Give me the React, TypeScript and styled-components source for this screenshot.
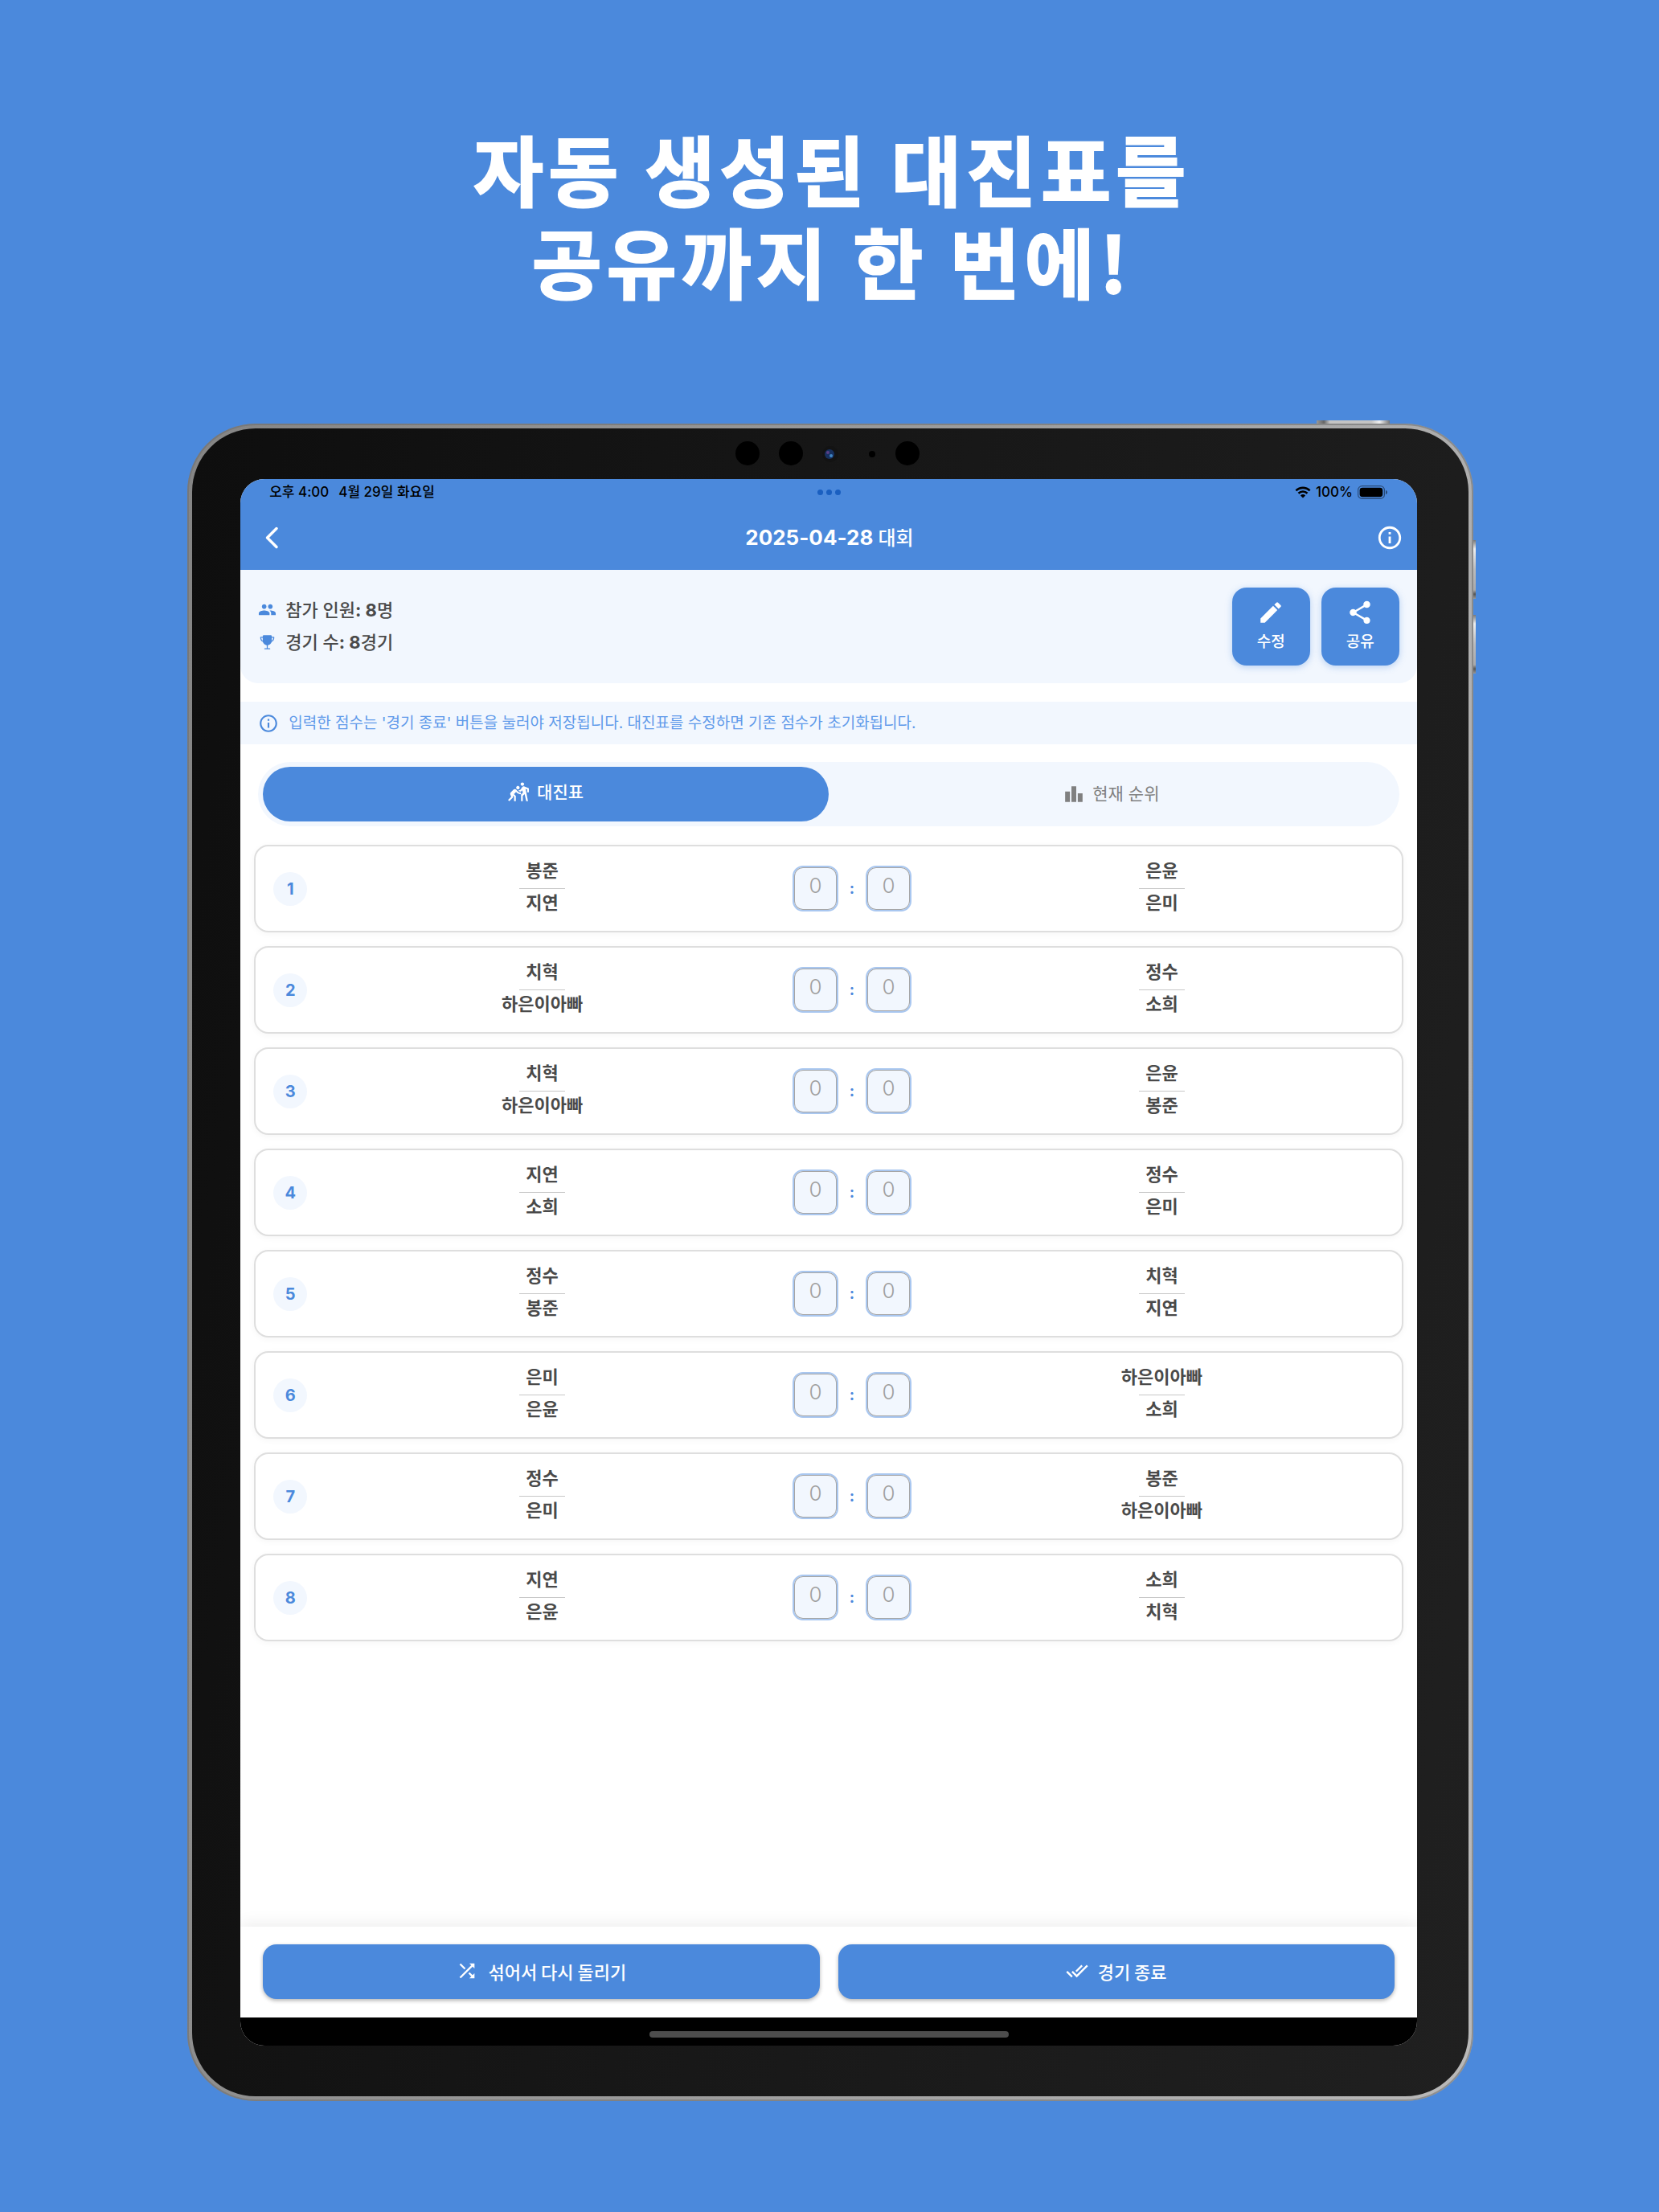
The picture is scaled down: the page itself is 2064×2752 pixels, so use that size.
import React from "react";
import styled, { createGlobalStyle, css } from "styled-components";
import {
  MdDoneAll,
  MdEdit,
  MdInfoOutline,
  MdLeaderboard,
  MdPeople,
  MdShare,
  MdShuffle,
  MdSportsKabaddi,
} from "react-icons/md";
import { IoTrophy } from "react-icons/io5";

const color = {
  blue: "#4b89dc",
  pale: "#f2f7fe",
  text: "#4a4a4a",
  muted: "#808080",
  line: "#dedede",
};
const sans = `Inter, "Noto Sans CJK KR", sans-serif`;
const korean = `"Noto Sans CJK KR", sans-serif`;

const GlobalStyle = createGlobalStyle`
  *, *::before, *::after { box-sizing: border-box; }
  body { margin: 0; background: ${color.blue}; font-family: ${sans}; color: ${color.text}; }
  button, input { font: inherit; color: inherit; margin: 0; }
  button { border: 0; background: none; padding: 0; cursor: pointer; }
  svg { display: block; flex: none; }
`;

const Page = styled.main`
  display: flex;
  flex-direction: column;
  align-items: center;
  min-height: 100vh;
  padding: 151px 0 137px;
  background: ${color.blue};
`;

const Headline = styled.h1`
  margin: 0 0 146px;
  padding-left: 6px;
  font: 700 95px/115px ${korean};
  letter-spacing: 0.06em;
  -webkit-text-stroke: 2px #fff;
  color: #fff;
  text-align: center;
`;

const Device = styled.div`
  position: relative;
  width: 77.5%;
  margin-left: 2px;
  padding: 6px;
  border-radius: 85px;
  background: linear-gradient(100deg, #858585, #9c9c9c 50%, #b9b9b9);
  box-shadow: inset 0 0 0 2px rgba(110, 110, 110, 0.55);
`;

const SideKey = styled.span<{ $top: number }>`
  position: absolute;
  left: 100%;
  top: ${(p) => p.$top}px;
  width: 3px;
  height: 73px;
  background: linear-gradient(#777, #eee 15%, #bbb 50%, #aaa 85%, #555 92%, #999);
`;

const PowerKey = styled.span`
  position: absolute;
  right: 104px;
  bottom: 100%;
  width: 91px;
  height: 4px;
  background: linear-gradient(90deg, #999, #666 10%, #c4c4c4 18%, #c4c4c4 75%, #f0f0f0 86%, #777);
`;

const Bezel = styled.div`
  padding: 0 64px 63px 60px;
  border-radius: 79px;
  background: linear-gradient(100deg, #0e0e0e, #181818 50%, #202020);
`;

const Sensors = styled.div`
  display: flex;
  align-items: center;
  justify-content: center;
  height: 63px;
  padding: 0 2px 2px 0;
`;

const Screen = styled.div`
  display: flex;
  flex-direction: column;
  aspect-ratio: 1464 / 1950;
  border-radius: 30px;
  overflow: hidden;
  background: #fff;
`;

const Header = styled.header`
  background: ${color.blue};
`;

const StatusBar = styled.div`
  display: grid;
  grid-template-columns: 1fr auto 1fr;
  align-items: center;
  height: 33px;
  padding: 0 36px;
  font-size: 17px;
  line-height: 29px;
  font-weight: 500;
  color: #000;
`;

const StatusGroup = styled.div<{ $end?: boolean }>`
  display: flex;
  align-items: center;
  gap: ${(p) => (p.$end ? 6 : 12)}px;
  justify-content: ${(p) => (p.$end ? "flex-end" : "flex-start")};
`;

const Dots = styled.div`
  display: flex;
  gap: 4px;
  i { width: 7px; height: 7px; border-radius: 50%; background: #1a5fc0; }
`;

const NavBar = styled.div`
  display: grid;
  grid-template-columns: 1fr auto 1fr;
  align-items: center;
  height: 80px;
  padding: 0 17px 0 27px;
  color: #fff;
  button:last-child { justify-self: end; }
`;

const Title = styled.h2`
  margin: 0;
  padding-right: 8px;
  font-size: 26px;
  line-height: 32px;
  font-weight: 700;
  span { font-size: 24px; font-weight: 500; }
`;

const Summary = styled.section`
  display: flex;
  align-items: center;
  justify-content: space-between;
  height: 141px;
  padding: 0 22px;
  border-radius: 0 0 22px 22px;
  background: ${color.pale};
`;

const Facts = styled.ul`
  margin: 0;
  padding: 0 0 2px;
  list-style: none;
`;

const Fact = styled.li`
  display: flex;
  align-items: center;
  gap: 11px;
  font-size: 22px;
  line-height: 40px;
  font-weight: 500;
  svg { width: 23px; color: ${color.blue}; }
  b { font-weight: 700; }
`;

const Actions = styled.div`
  display: flex;
  gap: 14px;
`;

const ActionButton = styled.button`
  display: flex;
  flex-direction: column;
  align-items: center;
  justify-content: center;
  gap: 6px;
  width: 97px;
  height: 97px;
  padding-bottom: 2px;
  border-radius: 18px;
  background: ${color.blue};
  color: #fff;
  font-size: 19px;
  line-height: 28px;
  font-weight: 500;
  box-shadow: 0 2px 8px rgba(75, 137, 220, 0.35);
`;

const Notice = styled.p`
  display: flex;
  align-items: center;
  gap: 12px;
  height: 53px;
  margin: 23px 0 22px;
  padding: 0 22px;
  background: ${color.pale};
  color: #5f9aea;
  font: 400 19px/28px ${sans};
  svg { color: ${color.blue}; }
`;

const Tabs = styled.div`
  display: flex;
  height: 80px;
  margin: 0 22px 23px;
  padding: 6px;
  border-radius: 40px;
  background: ${color.pale};
`;

const Tab = styled.button<{ $active?: boolean }>`
  display: flex;
  flex: 1;
  align-items: center;
  justify-content: center;
  gap: 10px;
  border-radius: 34px;
  font: 400 21px/30px ${sans};
  color: ${color.muted};
  ${(p) => p.$active && css`
    padding-bottom: 4px;
    background: ${color.blue};
    color: #fff;
    font-weight: 500;
  `}
`;

const Matches = styled.ol`
  display: flex;
  flex: 1;
  flex-direction: column;
  gap: 17px;
  margin: 0;
  padding: 0 17px;
  list-style: none;
`;

const Match = styled.li`
  display: flex;
  align-items: center;
  height: 109px;
  padding: 0 22px;
  border: 2px solid ${color.line};
  border-radius: 18px;
  background: #fff;
  box-shadow: 0 2px 8px rgba(0, 0, 0, 0.04);
`;

const Order = styled.span`
  display: grid;
  place-items: center;
  width: 42px;
  height: 42px;
  margin-right: 16px;
  border-radius: 50%;
  background: ${color.pale};
  color: ${color.blue};
  font-size: 20px;
  font-weight: 700;
`;

const Team = styled.div`
  display: flex;
  flex: 1;
  flex-direction: column;
  align-items: center;
  padding-bottom: 6px;
  font: 700 22px/32px ${sans};
  hr {
    width: 57px;
    height: 1px;
    margin: 6px 0 1px;
    border: 0;
    background: #c8c8c8;
  }
`;

const Score = styled.div`
  display: flex;
  align-items: center;
  justify-content: space-between;
  width: 148px;
  margin: 0 35px;
  color: ${color.blue};
  font-size: 19px;
  font-weight: 700;
`;

const ScoreInput = styled.input`
  width: 57px;
  height: 57px;
  padding: 0 0 8px;
  border: 2px solid #a9c7f0;
  border-radius: 13px;
  outline: 0;
  background: ${color.pale};
  box-shadow: inset 0 0 0 1px #a6a6a6;
  font: 300 26px/34px ${sans};
  color: ${color.text};
  text-align: center;
  &::placeholder { color: #a0a0a0; opacity: 1; }
`;

const Footer = styled.footer`
  display: flex;
  gap: 23px;
  padding: 22px 28px 23px;
  background: #fff;
  box-shadow: 0 -4px 18px rgba(0, 0, 0, 0.07);
`;

const FooterButton = styled.button`
  display: flex;
  flex: 1;
  align-items: center;
  justify-content: center;
  gap: 12px;
  height: 68px;
  padding-bottom: 2px;
  border-radius: 17px;
  background: ${color.blue};
  color: #fff;
  font: 500 22px/32px ${korean};
  box-shadow: 0 2px 5px rgba(0, 0, 0, 0.3);
`;

const HomeBar = styled.div`
  display: flex;
  align-items: center;
  justify-content: center;
  height: 35px;
  background: #000;
  i { width: 447px; height: 8px; margin-top: 7px; border-radius: 4px; background: #4d4d4d; }
`;

const matches: [string, string, string, string][] = [
  ["봉준", "지연", "은윤", "은미"],
  ["치혁", "하은이아빠", "정수", "소희"],
  ["치혁", "하은이아빠", "은윤", "봉준"],
  ["지연", "소희", "정수", "은미"],
  ["정수", "봉준", "치혁", "지연"],
  ["은미", "은윤", "하은이아빠", "소희"],
  ["정수", "은미", "봉준", "하은이아빠"],
  ["지연", "은윤", "소희", "치혁"],
];

const SensorArray = () => (
  <svg width="230" height="32" viewBox="0 0 230 32" aria-hidden="true">
    <circle cx="15" cy="16" r="15" fill="#000" />
    <circle cx="69" cy="16" r="15" fill="#000" />
    <circle cx="118" cy="17" r="10" fill="#131313" />
    <circle cx="117" cy="17" r="6" fill="#17305f" />
    <circle cx="115" cy="15" r="2" fill="#5a3f86" />
    <circle cx="119" cy="19" r="2" fill="#3f86c4" />
    <circle cx="170" cy="17" r="4" fill="#000" />
    <circle cx="214" cy="16" r="15" fill="#000" />
  </svg>
);

const Wifi = () => (
  <svg width="20" height="15" viewBox="0 0 20 15" aria-hidden="true">
    <path d="M1.4 5.4a12.3 12.3 0 0 1 17.2 0M4.5 8.8a7.9 7.9 0 0 1 11 0" fill="none" stroke="#000" strokeWidth="2.6" />
    <path d="M10 14.6 6.9 11.5a4.5 4.5 0 0 1 6.2 0z" />
  </svg>
);

const Battery = () => (
  <svg width="38" height="17" viewBox="0 0 38 17" aria-hidden="true">
    <rect x="0.6" y="0.6" width="32.8" height="15.8" rx="5" fill="none" stroke="#000" strokeOpacity="0.45" strokeWidth="1.2" />
    <rect x="2.6" y="2.8" width="28.6" height="11.4" rx="3.4" />
    <path d="M35 6v5c2.6-.6 2.6-4.4 0-5z" fillOpacity="0.5" />
  </svg>
);

const Chevron = () => (
  <svg width="24" height="30" viewBox="0 0 24 30" aria-hidden="true">
    <path d="M18 3.5 6.500 15 18 26.500" fill="none" stroke="#fff" strokeWidth="3.5" strokeLinecap="round" strokeLinejoin="round" />
  </svg>
);

export default function App() {
  return (
    <>
      <GlobalStyle />
      <Page>
        <Headline>
          자동 생성된 대진표를
          <br />
          공유까지 한 번에!
        </Headline>
        <Device>
          <PowerKey />
          <SideKey $top={145} />
          <SideKey $top={238} />
          <Bezel>
            <Sensors>
              <SensorArray />
            </Sensors>
            <Screen>
              <Header>
                <StatusBar>
                  <StatusGroup>
                    <span>오후 4:00</span>
                    <span>4월 29일 화요일</span>
                  </StatusGroup>
                  <Dots><i /><i /><i /></Dots>
                  <StatusGroup $end>
                    <Wifi />
                    <span>100%</span>
                    <Battery />
                  </StatusGroup>
                </StatusBar>
                <NavBar>
                  <button aria-label="뒤로"><Chevron /></button>
                  <Title>2025-04-28 <span>대회</span></Title>
                  <button aria-label="정보"><MdInfoOutline size={34} /></button>
                </NavBar>
              </Header>
              <Summary>
                <Facts>
                  <Fact><MdPeople size={23} /><span>참가 인원<b>: 8</b>명</span></Fact>
                  <Fact><IoTrophy size={20} /><span>경기 수<b>: 8</b>경기</span></Fact>
                </Facts>
                <Actions>
                  <ActionButton><MdEdit size={34} />수정</ActionButton>
                  <ActionButton><MdShare size={34} />공유</ActionButton>
                </Actions>
              </Summary>
              <Notice>
                <MdInfoOutline size={26} />
                입력한 점수는 '경기 종료' 버튼을 눌러야 저장됩니다. 대진표를 수정하면 기존 점수가 초기화됩니다.
              </Notice>
              <Tabs role="tablist">
                <Tab $active role="tab" aria-selected="true"><MdSportsKabaddi size={26} />대진표</Tab>
                <Tab role="tab" aria-selected="false"><MdLeaderboard size={26} />현재 순위</Tab>
              </Tabs>
              <Matches>
                {matches.map(([a, b, c, d], i) => (
                  <Match key={i}>
                    <Order>{i + 1}</Order>
                    <Team><span>{a}</span><hr /><span>{b}</span></Team>
                    <Score>
                      <ScoreInput placeholder="0" inputMode="numeric" aria-label={`${a} ${b} 점수`} />
                      <span>:</span>
                      <ScoreInput placeholder="0" inputMode="numeric" aria-label={`${c} ${d} 점수`} />
                    </Score>
                    <Team><span>{c}</span><hr /><span>{d}</span></Team>
                  </Match>
                ))}
              </Matches>
              <Footer>
                <FooterButton><MdShuffle size={28} />섞어서 다시 돌리기</FooterButton>
                <FooterButton><MdDoneAll size={28} />경기 종료</FooterButton>
              </Footer>
              <HomeBar><i /></HomeBar>
            </Screen>
          </Bezel>
        </Device>
      </Page>
    </>
  );
}
